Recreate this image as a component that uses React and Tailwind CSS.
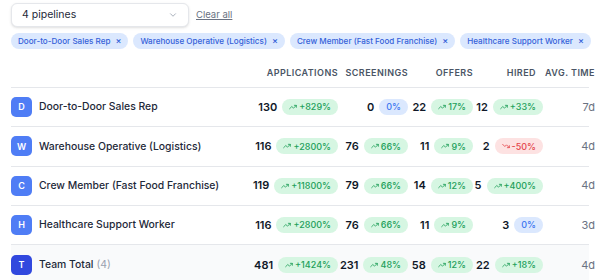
import React from 'react';
import { ChevronDown, TrendingUp, TrendingDown } from 'lucide-react';

const pipelines = [
  'Door-to-Door Sales Rep',
  'Warehouse Operative (Logistics)',
  'Crew Member (Fast Food Franchise)',
  'Healthcare Support Worker',
];

const rows = [
  { letter: 'D', name: 'Door-to-Door Sales Rep', apps: [130, '+829%', 'up'], screens: [0, '0%', 'flat'], offers: [22, '17%', 'up'], hired: [12, '+33%', 'up'], time: '7d' },
  { letter: 'W', name: 'Warehouse Operative (Logistics)', apps: [116, '+2800%', 'up'], screens: [76, '66%', 'up'], offers: [11, '9%', 'up'], hired: [2, '-50%', 'down'], time: '4d' },
  { letter: 'C', name: 'Crew Member (Fast Food Franchise)', apps: [119, '+11800%', 'up'], screens: [79, '66%', 'up'], offers: [14, '12%', 'up'], hired: [5, '+400%', 'up'], time: '4d' },
  { letter: 'H', name: 'Healthcare Support Worker', apps: [116, '+2800%', 'up'], screens: [76, '66%', 'up'], offers: [11, '9%', 'up'], hired: [3, '0%', 'flat'], time: '3d' },
];

const total = { apps: [481, '+1424%', 'up'], screens: [231, '48%', 'up'], offers: [58, '12%', 'up'], hired: [22, '+18%', 'up'], time: '4d' };

const grid = 'grid grid-cols-[239px_88px_70px_65px_70px_52px] items-center';

function Pill({ value, trend }) {
  if (trend === 'flat') {
    return (
      <span className="h-4 px-[7px] rounded-full bg-[#dbe8fe] text-[#3b76f0] text-[9px] font-medium flex items-center">
        {value}
      </span>
    );
  }
  if (trend === 'down') {
    return (
      <span className="h-4 px-[7px] rounded-full bg-[#fde2e2] text-[#e5484d] text-[9px] font-medium flex items-center gap-[2px]">
        <TrendingDown size={8} strokeWidth={2.5} />
        {value}
      </span>
    );
  }
  return (
    <span className="h-4 px-[7px] rounded-full bg-[#d6f6e2] text-[#22a05a] text-[9px] font-medium flex items-center gap-[2px]">
      <TrendingUp size={8} strokeWidth={2.5} />
      {value}
    </span>
  );
}

function Metric({ data }) {
  const [num, value, trend] = data;
  return (
    <div className="flex items-center justify-end gap-[5px]">
      <span className="text-[11px] font-semibold text-gray-900">{num}</span>
      <Pill value={value} trend={trend} />
    </div>
  );
}

function Row({ letter, name, extra, data, dark, last }) {
  return (
    <div className={`${grid} h-[39.3px] ${last ? 'bg-gray-50' : 'border-b border-gray-200'}`}>
      <div className="flex items-center gap-[7px]">
        <div
          className={`w-[21px] h-[20px] rounded-[5px] flex items-center justify-center text-white text-[9px] font-semibold ${
            dark ? 'bg-[#3148de]' : 'bg-[#4f7df5]'
          }`}
        >
          {letter}
        </div>
        <span className="text-[10.4px] font-medium text-gray-800">
          {name}
          {extra && <span className="text-gray-400 font-normal"> {extra}</span>}
        </span>
      </div>
      <Metric data={data.apps} />
      <Metric data={data.screens} />
      <Metric data={data.offers} />
      <Metric data={data.hired} />
      <div className="flex justify-end text-[11px] text-gray-500">{data.time}</div>
    </div>
  );
}

export default function App() {
  return (
    <div className="w-[600px] h-[280px] overflow-hidden bg-white px-[11px] pt-[3px] font-['Inter',sans-serif]">
      <div className="flex items-center gap-[7px]">
        <div className="w-[178px] h-6 rounded-md border border-gray-200 bg-white shadow-sm flex items-center justify-between pl-[10px] pr-[10px]">
          <span className="text-[10.5px] text-gray-800">4 pipelines</span>
          <ChevronDown size={10} className="text-gray-400" />
        </div>
        <button className="text-[9.5px] text-gray-500 underline">Clear all</button>
      </div>

      <div className="flex gap-[5px] mt-[6px]">
        {pipelines.map((p) => (
          <span
            key={p}
            className="h-4 px-[7px] rounded-full bg-[#dbe8fe] text-[#3461d9] text-[8.1px] font-medium flex items-center gap-[5px] whitespace-nowrap"
          >
            {p}
            <span className="text-[9px]">×</span>
          </span>
        ))}
      </div>

      <div className={`${grid} mt-[9px] h-[30px] border-b border-gray-200 text-[9px] font-semibold tracking-[0.05em] text-gray-600 whitespace-nowrap`}>
        <div />
        <div className="flex justify-end">APPLICATIONS</div>
        <div className="flex justify-end">SCREENINGS</div>
        <div className="flex justify-end">OFFERS</div>
        <div className="flex justify-end pr-[7px]">HIRED</div>
        <div className="flex justify-end">AVG. TIME</div>
      </div>

      {rows.map((r) => (
        <Row key={r.name} letter={r.letter} name={r.name} data={r} />
      ))}
      <Row letter="T" name="Team Total" extra="(4)" data={total} dark last />
    </div>
  );
}
